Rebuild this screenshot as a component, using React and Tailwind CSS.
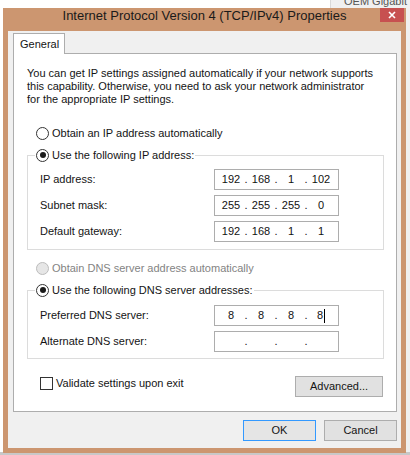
import React, { Fragment } from "react";

function Radio({ checked, disabled }) {
  return (
    <span
      className={
        "w-[13px] h-[13px] rounded-full border flex items-center justify-center shrink-0 " +
        (disabled ? "border-[#bcbcbc] bg-[#e6e6e6]" : "border-[#333333] bg-white")
      }
    >
      {checked && <span className="w-[6px] h-[6px] rounded-full bg-[#1a1a1a]" />}
    </span>
  );
}

function IpBox({ parts, cursor }) {
  return (
    <div className="w-[125px] h-[21px] border border-[#adadad] bg-white flex items-center pl-[3px] text-[11px] leading-[13px] text-[#111]">
      {parts.map((p, i) => (
        <Fragment key={i}>
          <span className="w-[26px] flex justify-center">
            <span>{p}</span>
            {cursor && i === 3 && <span className="w-[1px] h-[14px] bg-black ml-[1px]" />}
          </span>
          {i < 3 && <span className="w-[4px] text-center">.</span>}
        </Fragment>
      ))}
    </div>
  );
}

function Row({ label, parts, cursor, first }) {
  return (
    <div className={"flex items-center h-[21px] pl-[12px] " + (first ? "" : "mt-[5px]")}>
      <span className="w-[174px]">{label}</span>
      <IpBox parts={parts} cursor={cursor} />
    </div>
  );
}

export default function App() {
  return (
    <div className="relative w-[410px] h-[455px] overflow-hidden bg-white font-['Liberation_Sans',Arial,sans-serif] text-[11px] leading-[13px] text-[#141414]">
      <div className="absolute top-0 left-[330px] w-[80px] h-[455px] bg-[#f0f0f0] border-l border-[#d9d9d9]">
        <div className="ml-[13px] -mt-[5px] text-[11px] leading-[13px] text-[#555] whitespace-nowrap">OEM Gigabit</div>
      </div>
      <div className="absolute bottom-0 left-0 w-[410px] h-[3px] bg-[#c8c8c8]" />
      <div className="relative ml-[3px] mt-[8px] w-[403px] h-[445px] bg-[#cc9670] flex flex-col">
        <div className="grid grid-cols-[1fr_auto_1fr] h-[23px]">
          <div />
          <div className="self-start text-[13px] leading-[15px] text-[#1a1a1a] whitespace-nowrap">
            Internet Protocol Version 4 (TCP/IPv4) Properties
          </div>
          <div className="justify-self-end self-start mr-[2px] w-[24px] h-[14px] bg-[#c75050] flex items-center justify-center">
            <svg width="8" height="8" viewBox="0 0 8 8">
              <path d="M1 1 L7 7 M7 1 L1 7" stroke="white" strokeWidth="1.6" />
            </svg>
          </div>
        </div>
        <div className="mx-[5px] h-[417px] bg-[#f0f0f0] flex flex-col">
          <div className="ml-[5px] mt-[2px] w-[52px] h-[21px] -mb-[1px] relative z-10 bg-white border border-b-0 border-[#adadad] flex items-center pl-[6px]">
            General
          </div>
          <div className="ml-[5px] w-[384px] bg-white border border-[#adadad] pt-[13px] pb-[14px] flex flex-col">
            <p className="ml-[13px] w-[366px] whitespace-nowrap">
              You can get IP settings assigned automatically if your network supports
              <br />
              this capability. Otherwise, you need to ask your network administrator
              <br />
              for the appropriate IP settings.
            </p>
            <div className="ml-[22px] mt-[20px] h-[14px] flex items-center gap-[3px]">
              <Radio />
              <span>Obtain an IP address automatically</span>
            </div>
            <div className="ml-[13px] mt-[15px] w-[357px] border border-[#dcdcdc] pb-[7px] flex flex-col">
              <div className="-mt-[8px] ml-[7px] w-fit h-[14px] px-[1px] bg-white flex items-center gap-[3px]">
                <Radio checked />
                <span>Use the following IP address:</span>
              </div>
              <div className="mt-[7px]">
                <Row first label="IP address:" parts={["192", "168", "1", "102"]} />
                <Row label="Subnet mask:" parts={["255", "255", "255", "0"]} />
                <Row label="Default gateway:" parts={["192", "168", "1", "1"]} />
              </div>
            </div>
            <div className="ml-[22px] mt-[11px] h-[14px] flex items-center gap-[3px] text-[#838383]">
              <Radio disabled />
              <span>Obtain DNS server address automatically</span>
            </div>
            <div className="ml-[13px] mt-[15px] w-[357px] border border-[#dcdcdc] pb-[6px] flex flex-col">
              <div className="-mt-[8px] ml-[7px] w-fit h-[14px] px-[1px] bg-white flex items-center gap-[3px]">
                <Radio checked />
                <span>Use the following DNS server addresses:</span>
              </div>
              <div className="mt-[8px]">
                <Row first label="Preferred DNS server:" parts={["8", "8", "8", "8"]} cursor />
                <Row label="Alternate DNS server:" parts={["", "", "", ""]} />
              </div>
            </div>
            <div className="mt-[17px] flex items-start">
              <div className="ml-[26px] mt-[1px] flex items-center gap-[3px]">
                <span className="w-[13px] h-[13px] border border-[#333333] bg-white" />
                <span>Validate settings upon exit</span>
              </div>
              <div className="ml-auto mr-[13px] w-[88px] h-[21px] bg-[#e1e1e1] border border-[#adadad] flex items-center justify-center">
                Advanced...
              </div>
            </div>
          </div>
          <div className="ml-[5px] w-[384px] mt-[8px] flex justify-end gap-[8px]">
            <div className="w-[73px] h-[21px] bg-[#e5e5e5] border border-[#3399ff] flex items-center justify-center">OK</div>
            <div className="w-[73px] h-[21px] bg-[#e1e1e1] border border-[#adadad] flex items-center justify-center">Cancel</div>
          </div>
        </div>
      </div>
    </div>
  );
}
